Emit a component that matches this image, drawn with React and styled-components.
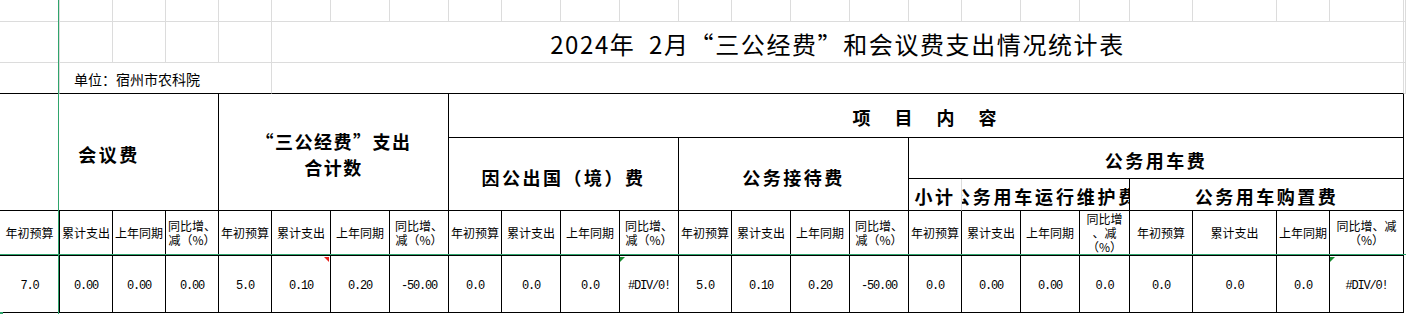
import React from 'react'
import styled, { createGlobalStyle, css } from 'styled-components'

const GlobalStyle = createGlobalStyle`
  html, body {
    margin: 0;
    padding: 0;
    background: #fff;
    overflow: hidden;
  }
  body {
    font-family: "Noto Sans CJK SC", "Noto Sans", sans-serif;
    color: #000;
  }
`

const COLS = [60, 53, 53, 53, 53, 59, 59, 59, 53, 59, 59, 59, 53, 59, 59, 59, 53, 59, 59, 50, 63, 84, 53, 74, 2]
const ROWS = [22, 41, 31, 44, 41, 32, 45, 57, 1]

const GRID = '#dcdcdc'
const FREEZE = '#2fa46c'

const SheetWrap = styled.div`
  position: relative;
  width: 1406px;
  height: 314px;
  overflow: hidden;
`

const Sheet = styled.div`
  display: grid;
  grid-template-columns: ${COLS.map(w => w + 'px').join(' ')};
  grid-template-rows: ${ROWS.map(h => h + 'px').join(' ')};
`

const place = css`
  grid-column: ${p => p.$c} / span ${p => p.$cs || 1};
  grid-row: ${p => p.$r} / span ${p => p.$rs || 1};
  box-sizing: border-box;
  min-width: 0;
`

const GridCell = styled.div`
  ${place}
  border-right: 1px solid ${p => (p.$noRight ? 'transparent' : GRID)};
  border-bottom: 1px solid ${p => (p.$edge ? '#000' : GRID)};
`

const TitleCell = styled(GridCell)`
  display: flex;
  align-items: center;
  justify-content: center;
  font-size: 24px;
  letter-spacing: 1.6px;
  white-space: nowrap;
  padding-top: 2px;
`

const UnitCell = styled(GridCell)`
  display: flex;
  align-items: center;
  padding-left: 14px;
  padding-top: 2px;
  font-size: 14px;
  white-space: nowrap;
`

const Box = styled.div`
  ${place}
  border-right: 1px solid ${p => (p.$softRight ? GRID : '#000')};
  border-bottom: 1px solid #000;
  display: flex;
  align-items: center;
  justify-content: center;
  overflow: hidden;
  text-align: center;
`

const HeadCell = styled(Box)`
  font-size: 18px;
  font-weight: 700;
  letter-spacing: ${p => p.$spacing || '2.5px'};
  line-height: 26px;
  white-space: nowrap;
  padding-top: ${p => p.$pt || 0};
`

const SubHead = styled(Box)`
  font-size: 12px;
  line-height: 14px;
  flex-direction: column;
  white-space: nowrap;
  padding: 0 1px;
`

const DataCell = styled(Box)`
  position: relative;
  overflow: visible;
  font-family: "Liberation Mono", "DejaVu Sans Mono", monospace;
  font-size: 12px;
  letter-spacing: -1.2px;
  padding-top: 3px;

  ${p => p.$mark === 'note' && css`
    &::after {
      content: '';
      position: absolute;
      top: 1px;
      right: 1px;
      border-top: 5px solid #e8201a;
      border-left: 5px solid transparent;
    }
  `}

  ${p => p.$mark === 'error' && css`
    &::after {
      content: '';
      position: absolute;
      top: 1px;
      left: 0;
      border-top: 5px solid #178a2e;
      border-right: 5px solid transparent;
    }
  `}
`

const Blank = styled.div`
  ${place}
`

const FreezeV = styled.div`
  position: absolute;
  top: 0;
  bottom: 0;
  left: 58px;
  width: 1px;
  background: ${FREEZE};
`

const FreezeH = styled.div`
  position: absolute;
  left: 0;
  right: 0;
  top: 254px;
  height: 1px;
  background: ${FREEZE};
`

const Corner = styled.div`
  position: absolute;
  left: 0;
  bottom: 0;
  width: 3px;
  height: 2px;
  background: ${FREEZE};
`

const pct = ['同比增、', '减（%）']

const subHeads = [
  ['年初预算'], ['累计支出'], ['上年同期'], pct,
  ['年初预算'], ['累计支出'], ['上年同期'], pct,
  ['年初预算'], ['累计支出'], ['上年同期'], pct,
  ['年初预算'], ['累计支出'], ['上年同期'], pct,
  ['年初预算'], ['累计支出'], ['上年同期'], ['同比增', '、减', '（%）'],
  ['年初预算'], ['累计支出'], ['上年同期'], ['同比增、减', '（%）'],
]

const values = [
  '7.0', '0.00', '0.00', '0.00',
  '5.0', '0.10', '0.20', '-50.00',
  '0.0', '0.0', '0.0', '#DIV/0!',
  '5.0', '0.10', '0.20', '-50.00',
  '0.0', '0.00', '0.00', '0.0',
  '0.0', '0.0', '0.0', '#DIV/0!',
]

const marks = { 5: 'note', 11: 'error', 23: 'error' }

export default function App() {
  return (
    <SheetWrap>
      <GlobalStyle />
      <Sheet>
        {COLS.map((_, i) => (
          <GridCell key={'r1-' + i} $c={i + 1} $r={1} />
        ))}

        {[1, 2, 3, 4, 5].map(c => (
          <GridCell key={'r2-' + c} $c={c} $r={2} />
        ))}
        <TitleCell $c={6} $cs={19} $r={2}>
          2024年{'\u2002'}2月“三公经费”和会议费支出情况统计表
        </TitleCell>
        <GridCell $c={25} $r={2} />

        <GridCell $c={1} $r={3} $edge />
        <UnitCell $c={2} $cs={4} $r={3} $edge>单位：宿州市农科院</UnitCell>
        <GridCell $c={6} $cs={19} $r={3} $edge />
        <GridCell $c={25} $r={3} />

        <HeadCell $c={1} $cs={4} $r={4} $rs={3} $pt="4px">会议费</HeadCell>
        <HeadCell $c={5} $cs={4} $r={4} $rs={3} $spacing="1.5px" $pt="4px">
          <div>
            “三公经费”支出
            <br />
            合计数
          </div>
        </HeadCell>
        <HeadCell $c={9} $cs={16} $r={4} $spacing="3px" $pt="2px">项　目　内　容</HeadCell>
        <HeadCell $c={9} $cs={4} $r={5} $rs={2} $pt="6px">因公出国（境）费</HeadCell>
        <HeadCell $c={13} $cs={4} $r={5} $rs={2} $pt="6px">公务接待费</HeadCell>
        <HeadCell $c={17} $cs={8} $r={5} $pt="4px">公务用车费</HeadCell>
        <HeadCell $c={17} $r={6} $softRight $spacing="2.5px" $pt="2px">小计</HeadCell>
        <HeadCell $c={18} $cs={3} $r={6} $spacing="2.8px" $pt="2px">公务用车运行维护费</HeadCell>
        <HeadCell $c={21} $cs={4} $r={6} $pt="2px">公务用车购置费</HeadCell>

        {subHeads.map((lines, i) => (
          <SubHead key={'sh-' + i} $c={i + 1} $r={7}>
            {lines.map(l => (
              <span key={l}>{l}</span>
            ))}
          </SubHead>
        ))}

        {values.map((v, i) => (
          <DataCell key={'v-' + i} $c={i + 1} $r={8} $mark={marks[i]}>
            {v}
          </DataCell>
        ))}

        <Blank $c={25} $r={4} $rs={6} />
      </Sheet>
      <FreezeV />
      <FreezeH />
      <Corner />
    </SheetWrap>
  )
}
